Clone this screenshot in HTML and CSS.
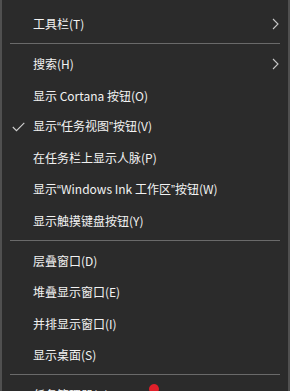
FILE: index.html
```html
<!DOCTYPE html>
<html lang="zh-CN">
<head>
<meta charset="utf-8">
<link rel="stylesheet" href="styles.css">
</head>
<body>
<div class="menu">
  <div class="item"><span class="label">工具栏(T)</span><svg class="chev" width="7" height="12" viewBox="0 0 7 12"><path d="M1 1 L6 6 L1 11" fill="none" stroke="#c8c8c8" stroke-width="1.1"/></svg></div>
  <div class="sep"></div>
  <div class="item"><span class="label">搜索(H)</span><svg class="chev" width="7" height="12" viewBox="0 0 7 12"><path d="M1 1 L6 6 L1 11" fill="none" stroke="#c8c8c8" stroke-width="1.1"/></svg></div>
  <div class="item"><span class="label">显示 Cortana 按钮(O)</span></div>
  <div class="item"><svg class="check" width="13" height="10" viewBox="0 0 13 10"><path d="M0.8 5 L4.5 8.7 L12.3 0.8" fill="none" stroke="#d0d0d0" stroke-width="1.1"/></svg><span class="label">显示<span class="q">“</span>任务视图<span class="q">”</span>按钮(V)</span></div>
  <div class="item"><span class="label">在任务栏上显示人脉(P)</span></div>
  <div class="item"><span class="label">显示<span class="q">“</span>Windows Ink 工作区<span class="q">”</span>按钮(W)</span></div>
  <div class="item"><span class="label">显示触摸键盘按钮(Y)</span></div>
  <div class="sep"></div>
  <div class="item"><span class="label">层叠窗口(D)</span></div>
  <div class="item"><span class="label">堆叠显示窗口(E)</span></div>
  <div class="item"><span class="label">并排显示窗口(I)</span></div>
  <div class="item"><span class="label">显示桌面(S)</span></div>
  <div class="sep"></div>
  <div class="item"><span class="label">任务管理器(K)</span></div>
  <div class="mark"></div>
</div>
</body>
</html>
```
FILE: styles.css
```css
html, body {
  margin: 0;
  padding: 0;
  background: #2b2b2b;
  overflow: hidden;
}
.menu {
  position: relative;
  width: 286px;
  height: 391px;
  background: #2b2b2b;
  border-left: 2px solid #505050;
  border-right: 2px solid #505050;
  padding-top: 8.3px;
  box-sizing: content-box;
  font-family: "Noto Sans CJK SC", "Noto Sans", sans-serif;
  font-size: 12px;
  color: #f2f2f2;
  overflow: hidden;
}
.item {
  position: relative;
  height: 31.3px;
  display: flex;
  align-items: center;
  padding-left: 31px;
  white-space: nowrap;
}
.label {
  line-height: 1;
}
.q {
  font-family: "Liberation Sans", sans-serif;
}
.chev {
  position: absolute;
  right: 9px;
  top: 50%;
  margin-top: -6px;
}
.check {
  position: absolute;
  left: 10px;
  top: 50%;
  margin-top: -5px;
}
.sep {
  height: 1px;
  margin: 3.5px 8px 4.5px 8px;
  background: #6a6a6a;
}
.mark {
  position: absolute;
  left: 147px;
  top: 384px;
  width: 10px;
  height: 10px;
  border-radius: 6px 6px 2px 6px;
  background: #e0202a;
  transform: rotate(20deg);
}
```
